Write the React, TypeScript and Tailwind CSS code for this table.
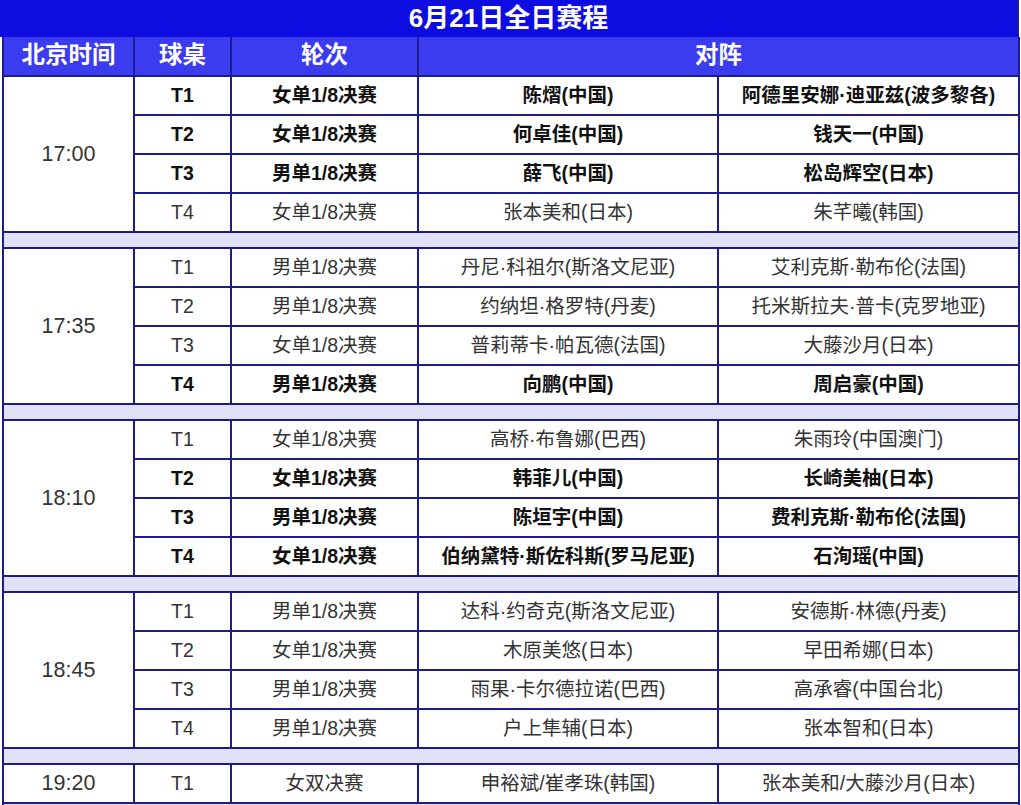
import React from "react";

type Row = { t: string; r: string; a: string; b: string; bold?: boolean };
type Group = { time: string; rows: Row[] };

const groups: Group[] = [
  {
    time: "17:00",
    rows: [
      { t: "T1", r: "女单1/8决赛", a: "陈熠(中国)", b: "阿德里安娜·迪亚兹(波多黎各)", bold: true },
      { t: "T2", r: "女单1/8决赛", a: "何卓佳(中国)", b: "钱天一(中国)", bold: true },
      { t: "T3", r: "男单1/8决赛", a: "薛飞(中国)", b: "松岛辉空(日本)", bold: true },
      { t: "T4", r: "女单1/8决赛", a: "张本美和(日本)", b: "朱芊曦(韩国)" },
    ],
  },
  {
    time: "17:35",
    rows: [
      { t: "T1", r: "男单1/8决赛", a: "丹尼·科祖尔(斯洛文尼亚)", b: "艾利克斯·勒布伦(法国)" },
      { t: "T2", r: "男单1/8决赛", a: "约纳坦·格罗特(丹麦)", b: "托米斯拉夫·普卡(克罗地亚)" },
      { t: "T3", r: "女单1/8决赛", a: "普莉蒂卡·帕瓦德(法国)", b: "大藤沙月(日本)" },
      { t: "T4", r: "男单1/8决赛", a: "向鹏(中国)", b: "周启豪(中国)", bold: true },
    ],
  },
  {
    time: "18:10",
    rows: [
      { t: "T1", r: "女单1/8决赛", a: "高桥·布鲁娜(巴西)", b: "朱雨玲(中国澳门)" },
      { t: "T2", r: "女单1/8决赛", a: "韩菲儿(中国)", b: "长崎美柚(日本)", bold: true },
      { t: "T3", r: "男单1/8决赛", a: "陈垣宇(中国)", b: "费利克斯·勒布伦(法国)", bold: true },
      { t: "T4", r: "女单1/8决赛", a: "伯纳黛特·斯佐科斯(罗马尼亚)", b: "石洵瑶(中国)", bold: true },
    ],
  },
  {
    time: "18:45",
    rows: [
      { t: "T1", r: "男单1/8决赛", a: "达科·约奇克(斯洛文尼亚)", b: "安德斯·林德(丹麦)" },
      { t: "T2", r: "女单1/8决赛", a: "木原美悠(日本)", b: "早田希娜(日本)" },
      { t: "T3", r: "男单1/8决赛", a: "雨果·卡尔德拉诺(巴西)", b: "高承睿(中国台北)" },
      { t: "T4", r: "男单1/8决赛", a: "户上隼辅(日本)", b: "张本智和(日本)" },
    ],
  },
  {
    time: "19:20",
    rows: [{ t: "T1", r: "女双决赛", a: "申裕斌/崔孝珠(韩国)", b: "张本美和/大藤沙月(日本)" }],
  },
];

const cell = "border-2 border-[#1c1c8e] text-center align-middle p-0 h-[39px] whitespace-nowrap";

export default function App() {
  return (
    <div
      className="w-[1021px] h-[805px] overflow-hidden bg-white"
      style={{ fontFamily: '"Liberation Sans", "Noto Sans CJK SC", sans-serif' }}
    >
      <div className="h-[37px] bg-[#0d0de2] flex items-center justify-center text-white font-bold text-[26px] w-[1019px] border-r-2 border-[#1c1c8e]">
        <span>6月21日全日赛程</span>
      </div>
      <table className="border-collapse table-fixed w-[1018px] ml-[2px]">
        <colgroup>
          <col className="w-[131px]" />
          <col className="w-[97px]" />
          <col className="w-[187px]" />
          <col className="w-[300px]" />
          <col className="w-[301px]" />
        </colgroup>
        <thead>
          <tr className="bg-[#3b3cf0] text-white font-bold text-[23.5px]">
            <th className={`${cell} h-[38px] border-t-0`}>北京时间</th>
            <th className={`${cell} h-[38px] border-t-0`}>球桌</th>
            <th className={`${cell} h-[38px] border-t-0`}>轮次</th>
            <th className={`${cell} h-[38px] border-t-0`} colSpan={2}>
              对阵
            </th>
          </tr>
        </thead>
        <tbody>
          {groups.map((g, gi) => (
            <React.Fragment key={gi}>
              {g.rows.map((row, ri) => {
                const txt = row.bold
                  ? "font-bold text-[#111111] text-[19.5px]"
                  : "font-normal text-[#333333] text-[19.5px]";
                return (
                  <tr key={ri} className="bg-white">
                    {ri === 0 && (
                      <td
                        className={`${cell} text-[21.5px] text-[#333333]`}
                        rowSpan={g.rows.length}
                      >
                        {g.time}
                      </td>
                    )}
                    <td className={`${cell} ${txt}`}>{row.t}</td>
                    <td className={`${cell} ${txt}`}>{row.r}</td>
                    <td className={`${cell} ${txt}`}>{row.a}</td>
                    <td className={`${cell} ${txt}`}>{row.b}</td>
                  </tr>
                );
              })}
              <tr>
                <td
                  colSpan={5}
                  className="border-2 border-[#1c1c8e] bg-[#e1e1f8] h-[16px] p-0"
                ></td>
              </tr>
            </React.Fragment>
          ))}
        </tbody>
      </table>
    </div>
  );
}
